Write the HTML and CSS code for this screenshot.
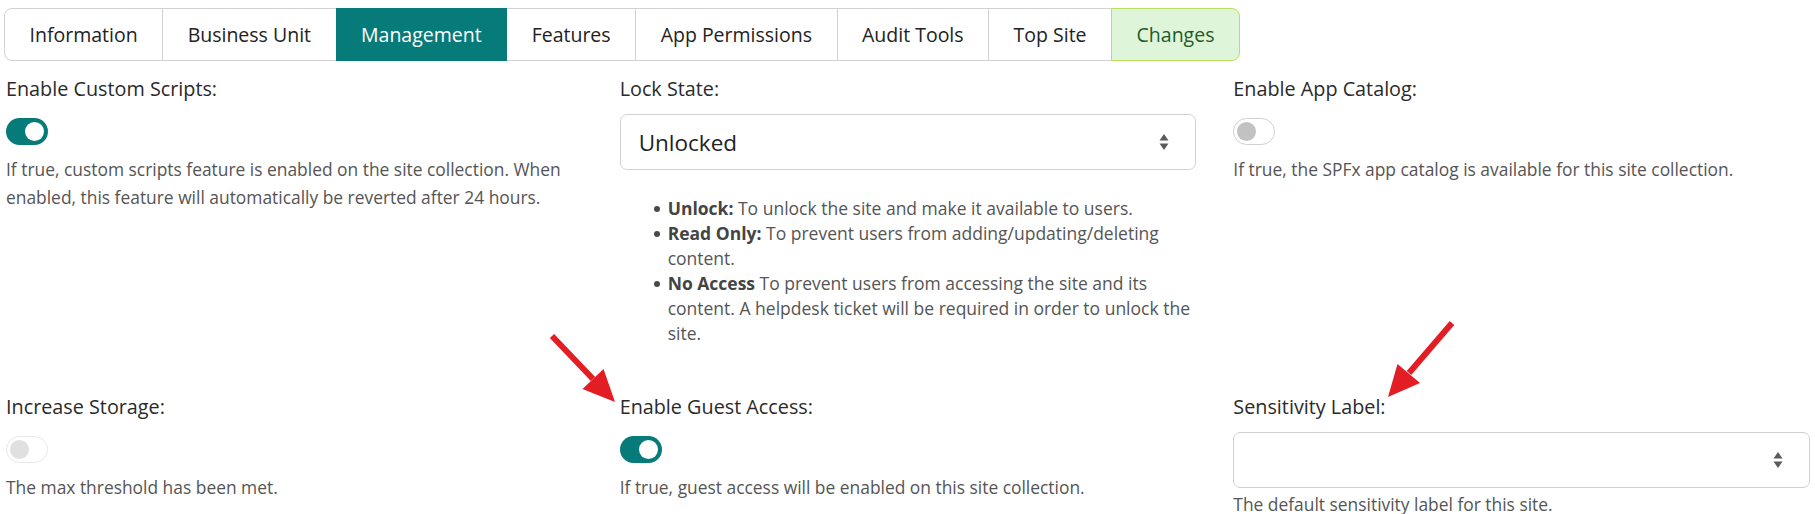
FILE: index.html
```html
<!DOCTYPE html>
<html lang="en">
<head>
<meta charset="utf-8">
<title>Site Management</title>
<link rel="stylesheet" href="styles.css">
</head>
<body>
<div class="page">
  <nav class="tabs">
    <div class="tab tab-first">Information</div>
    <div class="tab">Business Unit</div>
    <div class="tab tab-active">Management</div>
    <div class="tab">Features</div>
    <div class="tab">App Permissions</div>
    <div class="tab">Audit Tools</div>
    <div class="tab">Top Site</div>
    <div class="tab tab-changes">Changes</div>
  </nav>

  <div class="grid">
    <div class="field">
      <div class="label">Enable Custom Scripts:</div>
      <div class="toggle toggle-on"><span class="knob"></span></div>
      <p class="desc">If true, custom scripts feature is enabled on the site collection. When enabled, this feature will automatically be reverted after 24 hours.</p>
    </div>

    <div class="field">
      <div class="label">Lock State:</div>
      <div class="select">
        <span class="select-text">Unlocked</span>
        <svg class="caret" width="10" height="18" viewBox="0 0 10 18"><path d="M5 1 L9.5 7.5 H0.5 Z M5 17 L0.5 10.5 H9.5 Z" fill="#5a5a5a"/></svg>
      </div>
      <ul class="notes">
        <li><b>Unlock:</b> To unlock the site and make it available to users.</li>
        <li><b>Read Only:</b> To prevent users from adding/updating/deleting content.</li>
        <li><b>No Access</b> To prevent users from accessing the site and its content. A helpdesk ticket will be required in order to unlock the site.</li>
      </ul>
    </div>

    <div class="field">
      <div class="label">Enable App Catalog:</div>
      <div class="toggle toggle-off"><span class="knob"></span></div>
      <p class="desc">If true, the SPFx app catalog is available for this site collection.</p>
    </div>

    <div class="field">
      <div class="label">Increase Storage:</div>
      <div class="toggle toggle-disabled"><span class="knob"></span></div>
      <p class="desc">The max threshold has been met.</p>
    </div>

    <div class="field">
      <div class="label">Enable Guest Access:</div>
      <div class="toggle toggle-on"><span class="knob"></span></div>
      <p class="desc">If true, guest access will be enabled on this site collection.</p>
    </div>

    <div class="field">
      <div class="label">Sensitivity Label:</div>
      <div class="select">
        <span class="select-text"></span>
        <svg class="caret" width="10" height="18" viewBox="0 0 10 18"><path d="M5 1 L9.5 7.5 H0.5 Z M5 17 L0.5 10.5 H9.5 Z" fill="#5a5a5a"/></svg>
      </div>
      <p class="desc desc-tight">The default sensitivity label for this site.</p>
    </div>
  </div>

  <svg class="annot" width="1815" height="514" viewBox="0 0 1815 514">
    <line x1="552" y1="336" x2="593" y2="379" stroke="#e21d23" stroke-width="6"/>
    <polygon points="615,402 582.5,389 603.5,369" fill="#e21d23"/>
    <line x1="1452" y1="323" x2="1409" y2="373" stroke="#e21d23" stroke-width="6"/>
    <polygon points="1388,397 1397.5,364 1420,383" fill="#e21d23"/>
  </svg>
</div>
</body>
</html>
```

FILE: styles.css
```css
html, body {
  margin: 0;
  padding: 0;
  background: #ffffff;
}

body {
  font-family: "Open Sans", "Noto Sans", "Liberation Sans", sans-serif;
  color: #222222;
}

.page {
  position: relative;
  width: 1815px;
  height: 514px;
  overflow: hidden;
  padding: 8px 5px 0 6px;
  box-sizing: border-box;
}

/* Tabs */
.tabs {
  display: inline-flex;
  margin-left: -1px;
}

.tab {
  height: 51px;
  line-height: 51px;
  padding: 0 24.5px;
  font-size: 19.5px;
  color: #222222;
  border: 1px solid #d2d2d2;
  margin-left: -1px;
  background: #ffffff;
  white-space: nowrap;
}

.tab-first {
  border-radius: 8px 0 0 8px;
}

.tab-active {
  background: #077a7a;
  border-color: #077a7a;
  color: #ffffff;
  position: relative;
}

.tab-changes {
  background: #def5d9;
  border-color: #b8e065;
  color: #1f5a2c;
  border-radius: 0 8px 8px 0;
  position: relative;
}

/* Grid of fields */
.grid {
  display: grid;
  grid-template-columns: repeat(3, 1fr);
  column-gap: 37px;
  row-gap: 48px;
  margin-top: 15px;
}

.field {
  display: flex;
  flex-direction: column;
  align-items: flex-start;
}

.label {
  font-size: 19.8px;
  line-height: 26px;
  color: #2a2a2a;
}

/* Toggle switches */
.toggle {
  width: 42px;
  height: 27px;
  border-radius: 14px;
  margin-top: 16px;
  box-sizing: border-box;
  display: flex;
  align-items: center;
  padding: 0 4px;
}

.knob {
  width: 19px;
  height: 19px;
  border-radius: 50%;
}

.toggle-on {
  background: #077a7a;
  justify-content: flex-end;
}

.toggle-on .knob {
  background: #ffffff;
}

.toggle-off {
  background: #ffffff;
  border: 1px solid #d0d0d0;
  padding: 0 3px;
}

.toggle-off .knob {
  background: #c2c2c2;
}

.toggle-disabled {
  background: #ffffff;
  border: 1px solid #e8e8e8;
  padding: 0 3px;
}

.toggle-disabled .knob {
  background: #e0e0e0;
}

.desc {
  margin: 10px 0 0;
  font-size: 17.4px;
  line-height: 28px;
  color: #555555;
}

.desc-tight {
  margin-top: 2px;
}

/* Selects */
.select {
  align-self: stretch;
  height: 56px;
  box-sizing: border-box;
  border: 1px solid #d2d2d2;
  border-radius: 7px;
  margin-top: 12px;
  display: flex;
  align-items: center;
  justify-content: space-between;
  padding: 0 26px 0 18px;
  background: #ffffff;
}

.select-text {
  font-size: 22.5px;
  color: #222222;
}

.caret {
  display: block;
}

/* Notes list */
.notes {
  list-style: none;
  margin: 26px 0 0;
  padding: 0 0 0 48px;
  font-size: 17.5px;
  line-height: 25px;
  color: #555555;
}

.notes li {
  position: relative;
}

.notes li::before {
  content: "";
  position: absolute;
  left: -14px;
  top: 10px;
  width: 6px;
  height: 6px;
  border-radius: 50%;
  background: #4a4a4a;
}

.notes b {
  color: #444444;
  font-weight: 700;
}

/* Annotation arrows */
.annot {
  position: absolute;
  top: 0;
  left: 0;
  pointer-events: none;
}
```
